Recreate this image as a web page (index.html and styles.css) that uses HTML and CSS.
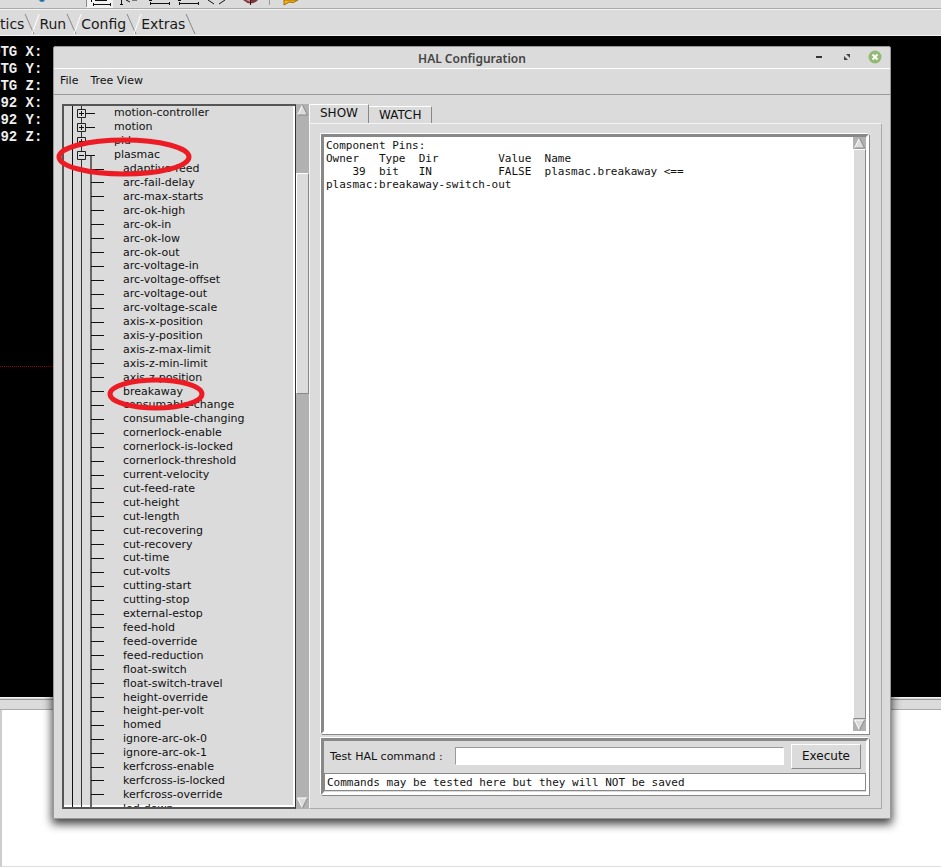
FILE: index.html
```html
<!DOCTYPE html>
<html lang="en">
<head>
  <meta charset="UTF-8">
  <title>HAL Configuration</title>
  <link rel="stylesheet" href="styles.css">
</head>
<body>

  <main class="backdrop">
    <div class="toolbar">
      <svg width="320" height="9" viewBox="0 0 320 9">
        <circle cx="42" cy="-1" r="3" fill="#2a73a8"/>
        <rect x="86" y="-2" width="27" height="10" fill="#f2f2f2"/>
        <path d="M86.500 0v7" stroke="#888"/>
        <g stroke="#111" fill="none">
          <path d="M91.500 0v2M93 4.500h18M93.500 3v3M110.500 3v3M95 .5h12M121.500 0v5M120 4.500h3M126 0l4 2M132 0h5M150 3.500h19M150.500 2v3M169.500 2v3M149 .5h3M179 3.500h19M179.500 2v3M198.500 2v3M178 .5h3M208 0l6 4M225 0l-6 4"/>
        </g>
        <path d="M243 0h15q-7 7-15 0z" fill="#81343a"/>
        <path d="M246 0h4v2z" fill="#d98a8a"/>
        <path d="M250.500 0v5" stroke="#222"/>
        <path d="M269.500 0v5" stroke="#999"/>
        <path d="M284 0h14q-5 4-9 2l-5 3z" fill="#f3b51b" stroke="#a26a00"/>
      </svg>
    </div>
    <nav class="tab-strip">
      <a class="strip-tab" href="#statistics">tics</a>
      <a class="strip-tab" href="#run">Run</a>
      <a class="strip-tab" href="#config">Config</a>
      <a class="strip-tab" href="#extras">Extras</a>
    </nav>
    <section class="preview">
      <pre class="readout">DTG X:
DTG Y:
DTG Z:
G92 X:
G92 Y:
G92 Z:</pre>
      <div class="limit-line"></div>
    </section>
    <div class="splitter"></div>
    <section class="lower-pane"></section>
  </main>

  <div class="window">
    <header class="titlebar">
      <h1>HAL Configuration</h1>
      <div class="window-buttons">
        <button aria-label="Minimize"><svg width="14" height="14"><path d="M4 7h6" stroke="#333" stroke-width="2"/></svg></button>
        <button aria-label="Maximize"><svg width="14" height="14"><path d="M6 4h4v4zM4 6v4h4z" fill="#444"/></svg></button>
        <button aria-label="Close"><svg width="14" height="14"><circle cx="7" cy="7" r="6.500" fill="#93b973"/><path d="M4.500 4.500l5 5M9.500 4.500l-5 5" stroke="#fff" stroke-width="2"/></svg></button>
      </div>
    </header>
    <nav class="menubar">
      <button>File</button>
      <button>Tree View</button>
    </nav>

    <div class="content">
      <div class="tree-box">
        <ul class="tree" id="tree"></ul>
      </div>
      <div class="scrollbar tree-scroll">
        <svg class="arrow" width="11" height="12"><path d="M5.500 1L10.500 11H.5z" fill="#dbdbdb"/><path d="M5.500 1L.5 11" stroke="#fff"/><path d="M5.500 1l5 10H.5" stroke="#888" fill="none"/></svg>
        <div class="trough"><div class="thumb"></div></div>
        <svg class="arrow" width="11" height="12"><path d="M5.500 11L.5 1h10z" fill="#dbdbdb"/><path d="M10.500 1H.5l5 10" stroke="#fff" fill="none"/><path d="M5.500 11l5-10" stroke="#888"/></svg>
      </div>

      <section class="notebook">
        <div class="tabs">
          <button class="tab active">SHOW</button>
          <button class="tab">WATCH</button>
        </div>
        <div class="page">
          <div class="output groove">
            <pre>Component Pins:
Owner   Type  Dir         Value  Name
    39  bit   IN          FALSE  plasmac.breakaway &lt;==
plasmac:breakaway-switch-out</pre>
            <div class="scrollbar">
              <svg class="arrow" width="11" height="12"><path d="M5.500 1L10.500 11H.5z" fill="#dbdbdb"/><path d="M5.500 1L.5 11" stroke="#fff"/><path d="M5.500 1l5 10H.5" stroke="#888" fill="none"/></svg>
              <div class="trough full"><div class="thumb"></div></div>
              <svg class="arrow" width="11" height="12"><path d="M5.500 11L.5 1h10z" fill="#dbdbdb"/><path d="M10.500 1H.5l5 10" stroke="#fff" fill="none"/><path d="M5.500 11l5-10" stroke="#888"/></svg>
            </div>
          </div>
          <form class="command groove">
            <div class="command-row">
              <label for="hal-command">Test HAL command :</label>
              <input type="text" id="hal-command">
              <button type="button" class="execute">Execute</button>
            </div>
            <input type="text" class="message" aria-label="Message" value="Commands may be tested here but they will NOT be saved" readonly>
          </form>
        </div>
      </section>
    </div>
  </div>

  <svg class="marks" width="320" height="420">
    <ellipse cx="124" cy="157" rx="65" ry="17" />
    <ellipse cx="156" cy="394" rx="46" ry="14" />
  </svg>

  <script src="tree.js"></script>
</body>
</html>
```
FILE: styles.css
```css
* {
  box-sizing: border-box;
}

body {
  margin: 0;
  font-family: "DejaVu Sans", sans-serif;
  font-size: 11px;
  color: #111;
}

button {
  font: inherit;
  color: inherit;
  padding: 0;
  border: none;
  background: none;
}

/* program behind the dialog */
.backdrop {
  height: 100vh;
  display: flex;
  flex-direction: column;
  background: #dbdbdb;
  overflow: hidden;
}

.toolbar {
  height: 9px;
  border-bottom: 1px solid #aaa;
}

.toolbar svg {
  display: block;
}

.tab-strip {
  height: 27px;
  padding-top: 4px;
  display: flex;
  border-top: 1px solid #f4f4f4;
  border-bottom: 1px solid #f4f4f4;
}

.strip-tab {
  position: relative;
  height: 20px;
  line-height: 20px;
  margin-right: 15px;
  font-size: 14px;
  color: #1a1a1a;
  text-decoration: none;
}

.strip-tab::after {
  content: "";
  position: absolute;
  right: -6px;
  top: 0;
  width: 1px;
  height: 20px;
  background: #888;
  transform: skewX(24deg);
}

.strip-tab + .strip-tab::before {
  content: "";
  position: absolute;
  left: -4px;
  top: 0;
  width: 1px;
  height: 20px;
  background: #fff;
  transform: skewX(-20deg);
}

.preview {
  flex: 1;
  position: relative;
  background: #000;
  overflow: hidden;
}

.readout {
  margin: 8px 0 0 -8px;
  font: bold 14px/17px "Liberation Mono", monospace;
  color: #eee;
}

.limit-line {
  position: absolute;
  top: 330px;
  width: 53px;
  border-top: 1px dotted #900;
}

.splitter {
  height: 13px;
  border-top: 1px solid #f4f4f4;
  border-bottom: 1px solid #aaa;
  box-shadow: inset 0 1px #dbdbdb, inset 0 2px #999;
}

.lower-pane {
  height: 157px;
  background: #fff;
  border-left: 2px solid #ccc;
  border-bottom: 1px solid #ddd;
}

/* dialog window */
.window {
  position: absolute;
  top: 46px;
  left: 53px;
  right: 50px;
  bottom: 48px;
  display: flex;
  flex-direction: column;
  background: #dbdbdb;
  border: 1px solid #999;
  border-radius: 2px 2px 0 0;
  box-shadow: 0 4px 10px 1px rgba(0, 0, 0, 0.75);
}

.titlebar {
  position: relative;
  height: 22px;
  border-bottom: 1px solid #fff;
}

.titlebar h1 {
  margin: 0;
  text-align: center;
  font-family: "Noto Sans", sans-serif;
  font-size: 12px;
  font-weight: 600;
  line-height: 23px;
  color: #444;
}

.window-buttons {
  position: absolute;
  top: 3px;
  right: 8px;
  display: flex;
  gap: 14px;
}

.window-buttons svg {
  display: block;
}

.menubar {
  height: 26px;
  padding: 0 6px 2px;
  display: flex;
  gap: 12px;
  border-bottom: 1px solid #999;
}

.content {
  flex: 1;
  min-height: 0;
  display: flex;
  padding: 9px 8px 9px 8px;
}

.tree-box {
  width: 234px;
  border: 2px solid #555;
  border-right: 1px solid #333;
  box-shadow: inset -2px -2px #fff;
  overflow: hidden;
}

.tree {
  height: 709px;
  margin: 0;
  padding: 0;
  display: flex;
  flex-direction: column;
  list-style: none;
  background: linear-gradient(#111, #111) 8px 0 / 1px 100% no-repeat,
    linear-gradient(#333, #333) 17px 0 / 1px 100% no-repeat;
}

.tree li {
  flex: 1;
  min-height: 0;
  display: flex;
  align-items: center;
}

.branch {
  padding-left: 13px;
}

.branch svg {
  margin-right: 18px;
}

.leaf {
  padding-left: 26px;
}

.leaf svg {
  margin-right: 19px;
}

.scrollbar {
  width: 13px;
  display: flex;
  flex-direction: column;
  align-items: center;
  background: #b1b1b1;
}

.arrow {
  display: block;
  flex: none;
}

.trough {
  flex: 1;
  width: 100%;
  padding-top: 57px;
}

.trough.full {
  padding: 0;
}

.thumb {
  height: 221px;
  background: #dbdbdb;
  border: 1px solid #888;
  border-top-color: #fff;
  border-left-color: #fff;
}

.full .thumb {
  height: 100%;
}

.notebook {
  flex: 1;
  min-width: 0;
  display: flex;
  flex-direction: column;
}

.tabs {
  height: 19px;
  display: flex;
  align-items: flex-end;
}

.tab {
  height: 17px;
  padding: 0 10px;
  font-size: 12px;
  border-top: 1px solid #fff;
  border-right: 1px solid #888;
}

.tab.active {
  height: 20px;
  margin-bottom: -1px;
  padding-bottom: 3px;
  background: #dbdbdb;
  border-left: 1px solid #fff;
}

.page {
  flex: 1;
  min-height: 0;
  display: flex;
  flex-direction: column;
  gap: 4px;
  padding: 10px 12px 13px 11px;
  border: 1px solid #aaa;
  border-top-color: #f4f4f4;
  border-left-color: #f4f4f4;
}

.groove {
  border: 3px solid #888;
  border-right-color: #fff;
  border-bottom-color: #fff;
  box-shadow: 1px 1px #888, -1px -1px #fff;
}

.output {
  flex: 1;
  min-height: 0;
  display: flex;
  background: #fff;
}

.output pre {
  flex: 1;
  margin: 0;
  padding: 2px;
  font: 11px/13px "DejaVu Sans Mono", monospace;
}

.command {
  padding-bottom: 1px;
}

.command-row {
  display: flex;
  align-items: center;
  height: 32px;
  padding: 0 5px 2px 6px;
  gap: 7px;
}

.command-row label {
  width: 118px;
  white-space: nowrap;
}

.command-row input {
  flex: 1;
  min-width: 0;
  height: 18px;
  background: #fff;
  border: 1px solid #999;
  border-right-color: #fff;
  border-bottom-color: #fff;
}

.execute {
  width: 70px;
  height: 25px;
  font-size: 12px;
  border: 1px solid #888;
  border-top-color: #fff;
  border-left-color: #fff;
}

.message {
  display: block;
  width: 100%;
  height: 18px;
  padding: 0 2px;
  font: 11px "DejaVu Sans Mono", monospace;
  color: inherit;
  background: #fff;
  border: 1px solid #888;
}

/* red pen circles drawn over the dialog */
.marks {
  position: absolute;
  top: 0;
  left: 0;
  fill: none;
  stroke: #ed1c24;
  stroke-width: 5;
  pointer-events: none;
}
```
FILE: tree.js
```js
const branches = ['motion-controller', 'motion', 'pid', 'plasmac'];
const pins = ['adaptive-feed', 'arc-fail-delay', 'arc-max-starts', 'arc-ok-high', 'arc-ok-in',
  'arc-ok-low', 'arc-ok-out', 'arc-voltage-in', 'arc-voltage-offset', 'arc-voltage-out',
  'arc-voltage-scale', 'axis-x-position', 'axis-y-position', 'axis-z-max-limit',
  'axis-z-min-limit', 'axis-z-position', 'breakaway', 'consumable-change',
  'consumable-changing', 'cornerlock-enable', 'cornerlock-is-locked', 'cornerlock-threshold',
  'current-velocity', 'cut-feed-rate', 'cut-height', 'cut-length', 'cut-recovering',
  'cut-recovery', 'cut-time', 'cut-volts', 'cutting-start', 'cutting-stop', 'external-estop',
  'feed-hold', 'feed-override', 'feed-reduction', 'float-switch', 'float-switch-travel',
  'height-override', 'height-per-volt', 'homed', 'ignore-arc-ok-0', 'ignore-arc-ok-1',
  'kerfcross-enable', 'kerfcross-is-locked', 'kerfcross-override', 'led-down'];

const tree = document.getElementById('tree');

branches.forEach(name => {
  const open = name === 'plasmac';
  const sign = open ? 'M2 7.500h5' : 'M2 7.500h5M4.500 5v5';
  const stem = open ? '<path d="M14 7v8" stroke="#666" stroke-width="2"/>' : '';
  tree.innerHTML += `<li class="branch"><svg width="19" height="14" overflow="visible">
    <path d="M.5 3.500h8v8h-8z" fill="#dbdbdb" stroke="#222"/>${stem}
    <path d="${sign}M9 7.500h9" stroke="#111"/></svg>${name}</li>`;
});

pins.forEach(name => {
  tree.innerHTML += `<li class="leaf"><svg width="14" height="14" overflow="visible">
    <path d="M1 0v14" stroke="#666" stroke-width="2"/>
    <path d="M1 7.500h13" stroke="#111"/></svg>${name}</li>`;
});
```
